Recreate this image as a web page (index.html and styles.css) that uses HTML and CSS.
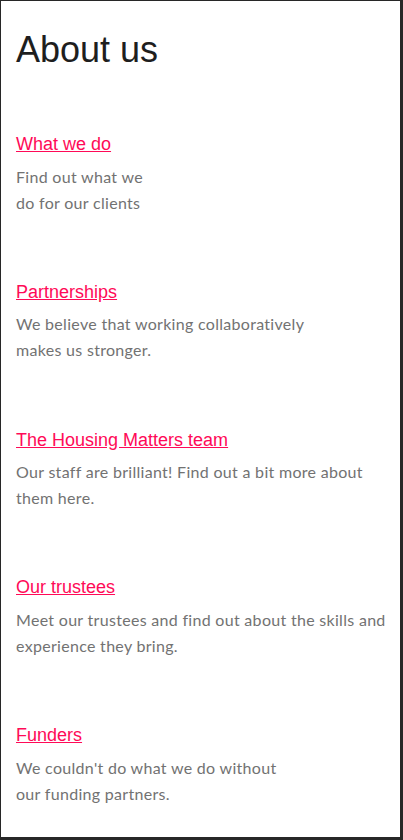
FILE: index.html
```html
<!DOCTYPE html>
<html lang="en">
<head>
<meta charset="utf-8">
<title>About us</title>
<link rel="stylesheet" href="styles.css">
</head>
<body>
<main class="page">
  <h1 class="title">About us</h1>
  <div class="sections">
    <section class="item">
      <a class="item-link" href="#">What we do</a>
      <p class="item-text">Find out what we<br>do for our clients</p>
    </section>
    <section class="item">
      <a class="item-link" href="#">Partnerships</a>
      <p class="item-text">We believe that working collaboratively<br>makes us stronger.</p>
    </section>
    <section class="item">
      <a class="item-link" href="#">The Housing Matters team</a>
      <p class="item-text">Our staff are brilliant! Find out a bit more about<br>them here.</p>
    </section>
    <section class="item">
      <a class="item-link" href="#">Our trustees</a>
      <p class="item-text">Meet our trustees and find out about the skills and<br>experience they bring.</p>
    </section>
    <section class="item">
      <a class="item-link" href="#">Funders</a>
      <p class="item-text">We couldn't do what we do without<br>our funding partners.</p>
    </section>
  </div>
</main>
</body>
</html>
```
FILE: styles.css
```css
html, body {
  margin: 0;
  padding: 0;
  background: #ffffff;
}

.page {
  box-sizing: border-box;
  width: 403px;
  height: 840px;
  border-style: solid;
  border-color: #272727;
  border-width: 1px 3px 3px 1px;
  padding: 27.5px 15px 0 15px;
  overflow: hidden;
}

.title {
  margin: 0;
  font-family: "Liberation Sans", Arial, sans-serif;
  font-weight: 400;
  font-size: 36px;
  line-height: 42px;
  color: #1e1e1e;
}

.sections {
  display: flex;
  flex-direction: column;
  gap: 65.25px;
  margin-top: 62.5px;
}

.item {
  display: flex;
  flex-direction: column;
  align-items: flex-start;
  gap: 8.5px;
}

.item-link {
  font-family: "Liberation Sans", Arial, sans-serif;
  font-size: 18px;
  line-height: 22px;
  color: #ff0a57;
  text-decoration: underline;
}

.item-text {
  margin: 0;
  font-family: Lato, "Noto Sans", sans-serif;
  font-size: 16px;
  line-height: 26px;
  letter-spacing: 0.3px;
  color: #727272;
  white-space: nowrap;
}
```
